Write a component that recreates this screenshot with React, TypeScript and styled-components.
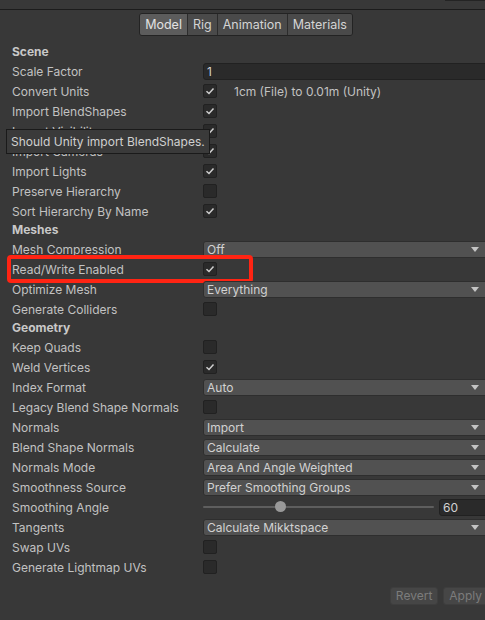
import React from 'react';
import styled, { createGlobalStyle } from 'styled-components';

type Field =
  | { kind: 'header'; label: string }
  | { kind: 'check'; label: string; checked?: boolean; note?: string; highlight?: boolean; tooltip?: string }
  | { kind: 'select'; label: string; value: string }
  | { kind: 'text'; label: string; value: string }
  | { kind: 'slider'; label: string; value: number; max: number };

const fields: Field[] = [
  { kind: 'header', label: 'Scene' },
  { kind: 'text', label: 'Scale Factor', value: '1' },
  { kind: 'check', label: 'Convert Units', checked: true, note: '1cm (File) to 0.01m (Unity)' },
  { kind: 'check', label: 'Import BlendShapes', checked: true, tooltip: 'Should Unity import BlendShapes.' },
  { kind: 'check', label: 'Import Visibility', checked: true },
  { kind: 'check', label: 'Import Cameras', checked: true },
  { kind: 'check', label: 'Import Lights', checked: true },
  { kind: 'check', label: 'Preserve Hierarchy' },
  { kind: 'check', label: 'Sort Hierarchy By Name', checked: true },
  { kind: 'header', label: 'Meshes' },
  { kind: 'select', label: 'Mesh Compression', value: 'Off' },
  { kind: 'check', label: 'Read/Write Enabled', checked: true, highlight: true },
  { kind: 'select', label: 'Optimize Mesh', value: 'Everything' },
  { kind: 'check', label: 'Generate Colliders' },
  { kind: 'header', label: 'Geometry' },
  { kind: 'check', label: 'Keep Quads' },
  { kind: 'check', label: 'Weld Vertices', checked: true },
  { kind: 'select', label: 'Index Format', value: 'Auto' },
  { kind: 'check', label: 'Legacy Blend Shape Normals' },
  { kind: 'select', label: 'Normals', value: 'Import' },
  { kind: 'select', label: 'Blend Shape Normals', value: 'Calculate' },
  { kind: 'select', label: 'Normals Mode', value: 'Area And Angle Weighted' },
  { kind: 'select', label: 'Smoothness Source', value: 'Prefer Smoothing Groups' },
  { kind: 'slider', label: 'Smoothing Angle', value: 60, max: 180 },
  { kind: 'select', label: 'Tangents', value: 'Calculate Mikktspace' },
  { kind: 'check', label: 'Swap UVs' },
  { kind: 'check', label: 'Generate Lightmap UVs' },
];

const tabs = ['Model', 'Rig', 'Animation', 'Materials'];

const GlobalStyle = createGlobalStyle`
  html, body {
    margin: 0;
    background: #383838;
  }
  body {
    font-family: Inter, 'Liberation Sans', sans-serif;
    font-size: 12px;
    color: #c2c2c2;
  }
`;

const Inspector = styled.div`
  width: 485px;
  height: 620px;
  overflow: hidden;
  background: #383838;
  display: flex;
  flex-direction: column;
`;

const TopStrip = styled.div`
  height: 9px;
  border-bottom: 1px solid #1c1c1c;
  display: flex;
  justify-content: flex-end;
  align-items: flex-start;
`;

const TopStub = styled.div`
  width: 40px;
  height: 1px;
  background: #242424;
`;

const TabBar = styled.div`
  display: flex;
  justify-content: center;
  padding: 3px 0 0 7px;
`;

const TabGroup = styled.div`
  display: flex;
  border: 1px solid #232323;
  border-radius: 3px;
  overflow: hidden;
`;

const Tab = styled.div<{ $active?: boolean }>`
  height: 21px;
  line-height: 21px;
  padding: 0 5px;
  font-size: 12.5px;
  background: ${(p) => (p.$active ? '#5c5c5c' : '#4a4a4a')};
  color: ${(p) => (p.$active ? '#e2e2e2' : '#d4d4d4')};
  & + & {
    border-left: 1px solid #2c2c2c;
  }
`;

const Fields = styled.div`
  display: flex;
  flex-direction: column;
  margin-top: 7px;
`;

const Header = styled.div`
  height: 18px;
  line-height: 18px;
  padding-left: 12px;
  font-weight: 700;
  color: #c8c8c8;
`;

const Row = styled.div`
  position: relative;
  height: 20px;
  display: flex;
  align-items: center;
  padding-left: 12px;
`;

const Label = styled.div`
  width: 191px;
  flex-shrink: 0;
  white-space: nowrap;
`;

const Control = styled.div`
  flex: 1;
  display: flex;
  align-items: center;
  min-width: 0;
`;

const Box = styled.div`
  width: 12px;
  height: 12px;
  border: 1px solid #212121;
  border-radius: 2px;
  background: #2a2a2a;
  display: flex;
  align-items: center;
  justify-content: center;
  flex-shrink: 0;
`;

const Note = styled.span`
  margin-left: 17px;
  white-space: nowrap;
`;

const Select = styled.div`
  flex: 1;
  height: 15px;
  line-height: 15px;
  margin-right: -3px;
  padding-left: 3px;
  border: 1px solid #2e2e2e;
  border-radius: 3px;
  background: #515151;
  color: #d2d2d2;
  display: flex;
  justify-content: space-between;
  align-items: center;
`;

const Arrow = styled.div`
  width: 0;
  height: 0;
  margin-right: 8px;
  border-left: 4px solid transparent;
  border-right: 4px solid transparent;
  border-top: 5px solid #c4c4c4;
`;

const Input = styled.div<{ $width?: number }>`
  ${(p) => (p.$width ? `width: ${p.$width}px;` : 'flex: 1;')}
  height: 15px;
  line-height: 15px;
  margin-right: -4px;
  padding-left: 3px;
  border: 1px solid #212121;
  border-radius: 3px;
  background: #2a2a2a;
  color: #d2d2d2;
  flex-shrink: 0;
`;

const Track = styled.div`
  position: relative;
  flex: 1;
  height: 2px;
  margin-right: 5px;
  border-radius: 1px;
  background: #5e5e5e;
`;

const Knob = styled.div`
  position: absolute;
  top: -5px;
  width: 11px;
  height: 11px;
  margin-left: -5px;
  border-radius: 50%;
  background: #999999;
`;

const Highlight = styled.div`
  position: absolute;
  left: 7px;
  top: -4px;
  width: 238px;
  height: 20px;
  border: 4px solid #ff2413;
  border-radius: 4px;
  pointer-events: none;
`;

const Tooltip = styled.div`
  position: absolute;
  left: 6px;
  top: 28px;
  z-index: 2;
  height: 23px;
  line-height: 23px;
  padding: 0 4px;
  border: 1px solid #1a1a1a;
  background: #3a3a3a;
  color: #d0d0d0;
  white-space: nowrap;
`;

const Footer = styled.div`
  display: flex;
  justify-content: flex-end;
  gap: 5px;
  margin: 10px -3px 0 0;
`;

const Button = styled.div`
  height: 16px;
  line-height: 16px;
  padding: 0 5px;
  border: 1px solid #3e3e3e;
  border-radius: 3px;
  background: #464646;
  color: #7c7c7c;
`;

const Tick = () => (
  <svg width='10' height='10' viewBox='0 0 10 10'>
    <path d='M1.5 5.2 L4 7.5 L8.5 2.5' fill='none' stroke='#d0d0d0' strokeWidth='1.5' />
  </svg>
);

const renderControl = (f: Field) => {
  switch (f.kind) {
    case 'check':
      return (
        <>
          <Box>{f.checked && <Tick />}</Box>
          {f.note && <Note>{f.note}</Note>}
        </>
      );
    case 'select':
      return (
        <Select>
          <span>{f.value}</span>
          <Arrow />
        </Select>
      );
    case 'text':
      return <Input>{f.value}</Input>;
    case 'slider':
      return (
        <>
          <Track>
            <Knob style={{ left: `${(f.value / f.max) * 100}%` }} />
          </Track>
          <Input $width={45}>{f.value}</Input>
        </>
      );
    default:
      return null;
  }
};

const App = () => {
  return (
    <Inspector>
      <GlobalStyle />
      <TopStrip>
        <TopStub />
      </TopStrip>
      <TabBar>
        <TabGroup>
          {tabs.map((t) => (
            <Tab key={t} $active={t === 'Model'}>
              {t}
            </Tab>
          ))}
        </TabGroup>
      </TabBar>
      <Fields>
        {fields.map((f) =>
          f.kind === 'header' ? (
            <Header key={f.label}>{f.label}</Header>
          ) : (
            <Row key={f.label}>
              <Label>{f.label}</Label>
              <Control>{renderControl(f)}</Control>
              {f.kind === 'check' && f.highlight && <Highlight />}
              {f.kind === 'check' && f.tooltip && <Tooltip>{f.tooltip}</Tooltip>}
            </Row>
          )
        )}
      </Fields>
      <Footer>
        <Button>Revert</Button>
        <Button>Apply</Button>
      </Footer>
    </Inspector>
  );
};

export default App;
